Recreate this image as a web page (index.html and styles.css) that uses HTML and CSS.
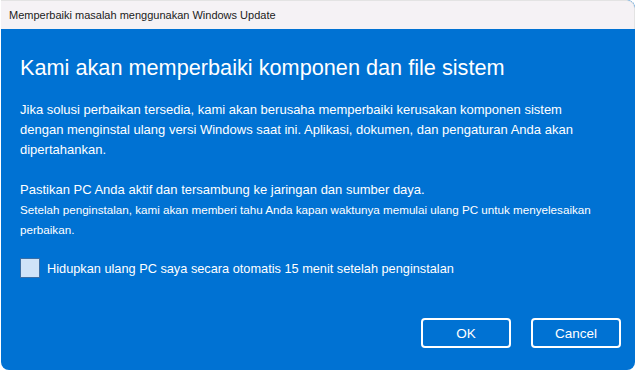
FILE: index.html
```html
<!DOCTYPE html>
<html lang="id">
<head>
    <meta charset="UTF-8">
    <meta name="viewport" content="width=device-width, initial-scale=1.0">
    <title>Memperbaiki masalah menggunakan Windows Update</title>
    <link rel="stylesheet" href="styles.css">
</head>
<body>
  <div class="window">
    <div class="titlebar">Memperbaiki masalah menggunakan Windows Update</div>
    <div class="content">
      <h1 class="heading">Kami akan memperbaiki komponen dan file sistem</h1>
      <p class="text">Jika solusi perbaikan tersedia, kami akan berusaha memperbaiki kerusakan komponen sistem dengan menginstal ulang versi Windows saat ini. Aplikasi, dokumen, dan pengaturan Anda akan dipertahankan.</p>
      <p class="text text-gap">Pastikan PC Anda aktif dan tersambung ke jaringan dan sumber daya.</p>
      <p class="text-small">Setelah penginstalan, kami akan memberi tahu Anda kapan waktunya memulai ulang PC untuk menyelesaikan perbaikan.</p>
      <label class="check">
        <span class="box"></span>
        Hidupkan ulang PC saya secara otomatis 15 menit setelah penginstalan
      </label>
      <div class="buttons">
        <button type="button" class="btn">OK</button>
        <button type="button" class="btn">Cancel</button>
      </div>
    </div>
  </div>
</body>
</html>
```
FILE: styles.css
```css
body {
  margin: 0;
  background-color: #ffffff;
  font-family: 'Liberation Sans', Arial, sans-serif;
}

.window {
  width: 634px;
  height: 370px;
  margin-left: 1px;
  border-radius: 0 8px 8px 8px;
  overflow: hidden;
  background-color: #0072d3;
  display: flex;
  flex-direction: column;
}

.titlebar {
  height: 29px;
  line-height: 29px;
  padding-left: 8px;
  font-size: 11px;
  color: #1b1b1b;
  background-color: #f5f2f5;
  border-top: 1px solid #e3e3e3;
  border-right: 1px solid #e3e3e3;
  border-top-right-radius: 8px;
  box-sizing: border-box;
}

.content {
  flex: 1;
  padding: 25px 14px 0 19px;
  color: #ffffff;
  display: flex;
  flex-direction: column;
}

.heading {
  margin: 0 0 18px 0;
  font-size: 21.7px;
  font-weight: normal;
  line-height: 28px;
}

.text {
  margin: 0;
  max-width: 576px;
  font-size: 13px;
  line-height: 20px;
}

.text-gap {
  margin-top: 20px;
}

.text-small {
  margin: 0;
  font-size: 11.65px;
  line-height: 20px;
}

/* casilla de verificacion */
.check {
  display: flex;
  align-items: center;
  gap: 7px;
  margin-top: 18px;
  font-size: 12.75px;
}

.box {
  width: 18px;
  height: 18px;
  border: 1px solid #3a6ea5;
  background-color: #cfe3f8;
}

.buttons {
  display: flex;
  justify-content: flex-end;
  gap: 20px;
  margin-top: 40px;
}

.btn {
  width: 90px;
  height: 30px;
  background-color: #0072d3;
  color: #ffffff;
  border: 2px solid #ffffff;
  border-radius: 4px;
  font-family: 'Liberation Sans', Arial, sans-serif;
  font-size: 13.5px;
}
```
